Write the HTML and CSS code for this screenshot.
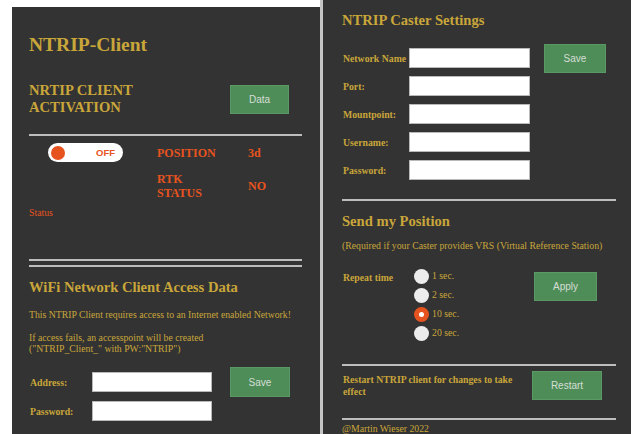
FILE: index.html
```html
<!DOCTYPE html>
<html lang="en">
<head>
<meta charset="utf-8">
<title>NTRIP-Client</title>
<link rel="stylesheet" href="styles.css">
</head>
<body>
<div class="screens">
  <section class="panel panel-client">
    <h1 class="title">NTRIP-Client</h1>

    <div class="activation">
      <h2 class="heading heading-narrow">NRTIP CLIENT ACTIVATION</h2>
      <button class="btn btn-data" type="button">Data</button>
    </div>

    <hr class="rule rule-activation">

    <div class="status-grid">
      <div class="toggle"><span class="knob"></span><span class="toggle-text">OFF</span></div>
      <div class="stat-label">POSITION</div>
      <div class="stat-value">3d</div>
      <div></div>
      <div class="stat-label">RTK<br>STATUS</div>
      <div class="stat-value">NO</div>
    </div>

    <p class="status-text">Status</p>

    <hr class="rule rule-pair-top">
    <hr class="rule rule-pair-bottom">

    <h2 class="heading heading-wifi">WiFi Network Client Access Data</h2>
    <p class="note note-first">This NTRIP Client requires access to an Internet enabled Network!</p>
    <p class="note note-second">If access fails, an accesspoint will be created<br>("NTRIP_Client_" with PW:"NTRIP")</p>

    <form class="wifi-form">
      <label class="field-label" for="wifi-address">Address:</label>
      <input class="field" id="wifi-address" type="text">
      <button class="btn btn-wifi-save" type="button">Save</button>
      <label class="field-label" for="wifi-password">Password:</label>
      <input class="field" id="wifi-password" type="password">
    </form>
  </section>

  <div class="divider"></div>

  <section class="panel panel-caster">
    <h2 class="heading">NTRIP Caster Settings</h2>

    <form class="caster-form">
      <label class="field-label" for="caster-network">Network Name</label>
      <input class="field" id="caster-network" type="text">
      <button class="btn btn-caster-save" type="button">Save</button>
      <label class="field-label" for="caster-port">Port:</label>
      <input class="field" id="caster-port" type="text">
      <label class="field-label" for="caster-mount">Mountpoint:</label>
      <input class="field" id="caster-mount" type="text">
      <label class="field-label" for="caster-user">Username:</label>
      <input class="field" id="caster-user" type="text">
      <label class="field-label" for="caster-pass">Password:</label>
      <input class="field" id="caster-pass" type="password">
    </form>

    <hr class="rule rule-caster">

    <h2 class="heading heading-send">Send my Position</h2>
    <p class="note note-vrs">(Required if your Caster provides VRS (Virtual Reference Station)</p>

    <div class="repeat">
      <span class="field-label repeat-label">Repeat time</span>
      <div class="radio-list">
        <label class="radio-item"><input type="radio" name="repeat"><span>1 sec.</span></label>
        <label class="radio-item"><input type="radio" name="repeat"><span>2 sec.</span></label>
        <label class="radio-item"><input type="radio" name="repeat" checked><span>10 sec.</span></label>
        <label class="radio-item"><input type="radio" name="repeat"><span>20 sec.</span></label>
      </div>
      <button class="btn btn-apply" type="button">Apply</button>
    </div>

    <hr class="rule rule-restart">

    <div class="restart">
      <span class="field-label restart-text">Restart NTRIP client for changes to take effect</span>
      <button class="btn btn-restart" type="button">Restart</button>
    </div>

    <hr class="rule rule-footer">

    <p class="note footer">@Martin Wieser 2022</p>
  </section>
</div>
</body>
</html>
```

FILE: styles.css
```css
html, body {
  margin: 0;
  padding: 0;
  background: #ffffff;
}

body {
  width: 631px;
  height: 434px;
  overflow: hidden;
  font-family: "Liberation Serif", "Times New Roman", serif;
  color: #c9a63a;
}

.screens {
  display: flex;
  height: 434px;
  padding-left: 12px;
}

.panel {
  box-sizing: border-box;
  background: #333333;
}

.panel-client {
  flex: 0 0 308px;
  width: 308px;
  margin-top: 7px;
  padding: 26px 18px 0 17px;
}

.divider {
  flex: 0 0 3px;
  background: #c4c4c4;
}

.panel-caster {
  flex: 1 1 auto;
  min-width: 0;
  padding: 12px 15px 0 19px;
}

/* headings */
.title {
  margin: 0;
  font-size: 19.5px;
  line-height: 23px;
  font-weight: bold;
  color: #c9a63a;
}

.heading {
  margin: 0;
  font-size: 14.6px;
  line-height: 17px;
  font-weight: bold;
  color: #c9a63a;
}

.heading-narrow {
  width: 120px;
}

.heading-wifi {
  margin-top: 12px;
}

.heading-send {
  margin-top: 12px;
}

/* rules */
.rule {
  border: 0;
  height: 2px;
  margin: 0;
  background: #bdbdbd;
}

.rule-activation { margin-top: 18px; }
.rule-pair-top { margin-top: 40px; }
.rule-pair-bottom { margin-top: 4px; }
.rule-caster { margin-top: 19px; }
.rule-restart { margin-top: 23px; }
.rule-footer { margin-top: 18px; }

/* buttons */
.btn {
  box-sizing: border-box;
  padding: 0;
  border: 1px solid #5a9864;
  background: #4e8d58;
  color: #d6ded6;
  font-family: "Liberation Sans", Arial, sans-serif;
  font-size: 10px;
  cursor: pointer;
}

.btn-data {
  width: 59px;
  height: 29px;
  margin-left: auto;
  margin-right: 13px;
}

.btn-wifi-save {
  width: 60px;
  height: 30px;
  margin-left: 18px;
}

.btn-caster-save {
  grid-column: 3;
  grid-row: 1;
  align-self: center;
  width: 62px;
  height: 29px;
  margin-left: 14px;
}

.btn-apply {
  width: 63px;
  height: 29px;
  margin-top: 3px;
}

.btn-restart {
  width: 70px;
  height: 29px;
  margin-left: 7px;
}

/* activation row */
.activation {
  display: flex;
  align-items: center;
  margin-top: 26px;
}

/* status block */
.status-grid {
  display: grid;
  grid-template-columns: 128px 91px auto;
  row-gap: 10px;
  align-items: center;
  margin-top: 7px;
  color: #e6531f;
  font-weight: bold;
  font-size: 12px;
  line-height: 14px;
}

.toggle {
  box-sizing: border-box;
  display: flex;
  align-items: center;
  width: 75px;
  height: 19px;
  margin-left: 19px;
  padding: 0 8px 0 3px;
  border-radius: 10px;
  background: #ffffff;
}

.knob {
  width: 14px;
  height: 14px;
  border-radius: 50%;
  background: #e6531f;
}

.toggle-text {
  margin-left: auto;
  font-family: "Liberation Sans", Arial, sans-serif;
  font-size: 9.5px;
  font-weight: bold;
  color: #e6531f;
}

.status-text {
  margin: 7px 0 0;
  font-size: 9.75px;
  line-height: 12px;
  color: #e6531f;
}

/* notes */
.note {
  margin: 0;
  font-size: 9.75px;
  line-height: 11px;
  color: #c9a63a;
  white-space: nowrap;
}

.note-first { margin-top: 13px; }
.note-second { margin-top: 12px; }
.note-vrs { margin-top: 10px; }
.footer { margin-top: 3px; }

/* forms */
.field-label {
  font-size: 9.75px;
  font-weight: bold;
  color: #c9a63a;
}

.field {
  box-sizing: border-box;
  width: 120px;
  height: 20px;
  margin: 0;
  padding: 0 3px;
  border: 1px solid #b9b9b9;
  background: #ffffff;
}

.wifi-form {
  display: grid;
  grid-template-columns: 63px 120px auto;
  grid-template-rows: 30px 20px;
  row-gap: 4px;
  align-items: center;
  margin-top: 13px;
}

.wifi-form .field-label {
  padding-left: 1px;
}

.caster-form {
  display: grid;
  grid-template-columns: 67px 121px auto;
  grid-template-rows: repeat(5, 20px);
  row-gap: 8px;
  align-items: center;
  margin-top: 19px;
}

.caster-form .field-label {
  grid-column: 1;
  padding-left: 1px;
  white-space: nowrap;
}

.caster-form .field {
  grid-column: 2;
  width: 121px;
}

/* repeat time */
.repeat {
  display: grid;
  grid-template-columns: 72px 120px auto;
  align-items: start;
  margin-top: 18px;
}

.repeat-label {
  margin-top: 3px;
  padding-left: 1px;
  line-height: 12px;
}

.radio-list {
  display: flex;
  flex-direction: column;
  gap: 4px;
}

.radio-item {
  display: flex;
  align-items: flex-start;
  gap: 3px;
  font-size: 9.75px;
  line-height: 13px;
  color: #c9a63a;
}

.radio-item input {
  appearance: none;
  -webkit-appearance: none;
  box-sizing: border-box;
  flex: 0 0 15px;
  width: 15px;
  height: 15px;
  margin: 0;
  border-radius: 50%;
  background: #ececec;
}

.radio-item input:checked {
  background: #ffffff;
  border: 5px solid #e6531f;
}

/* restart */
.restart {
  display: flex;
  align-items: center;
  margin-top: 5px;
}

.restart-text {
  width: 182px;
  padding-left: 1px;
  line-height: 11.5px;
}
```
